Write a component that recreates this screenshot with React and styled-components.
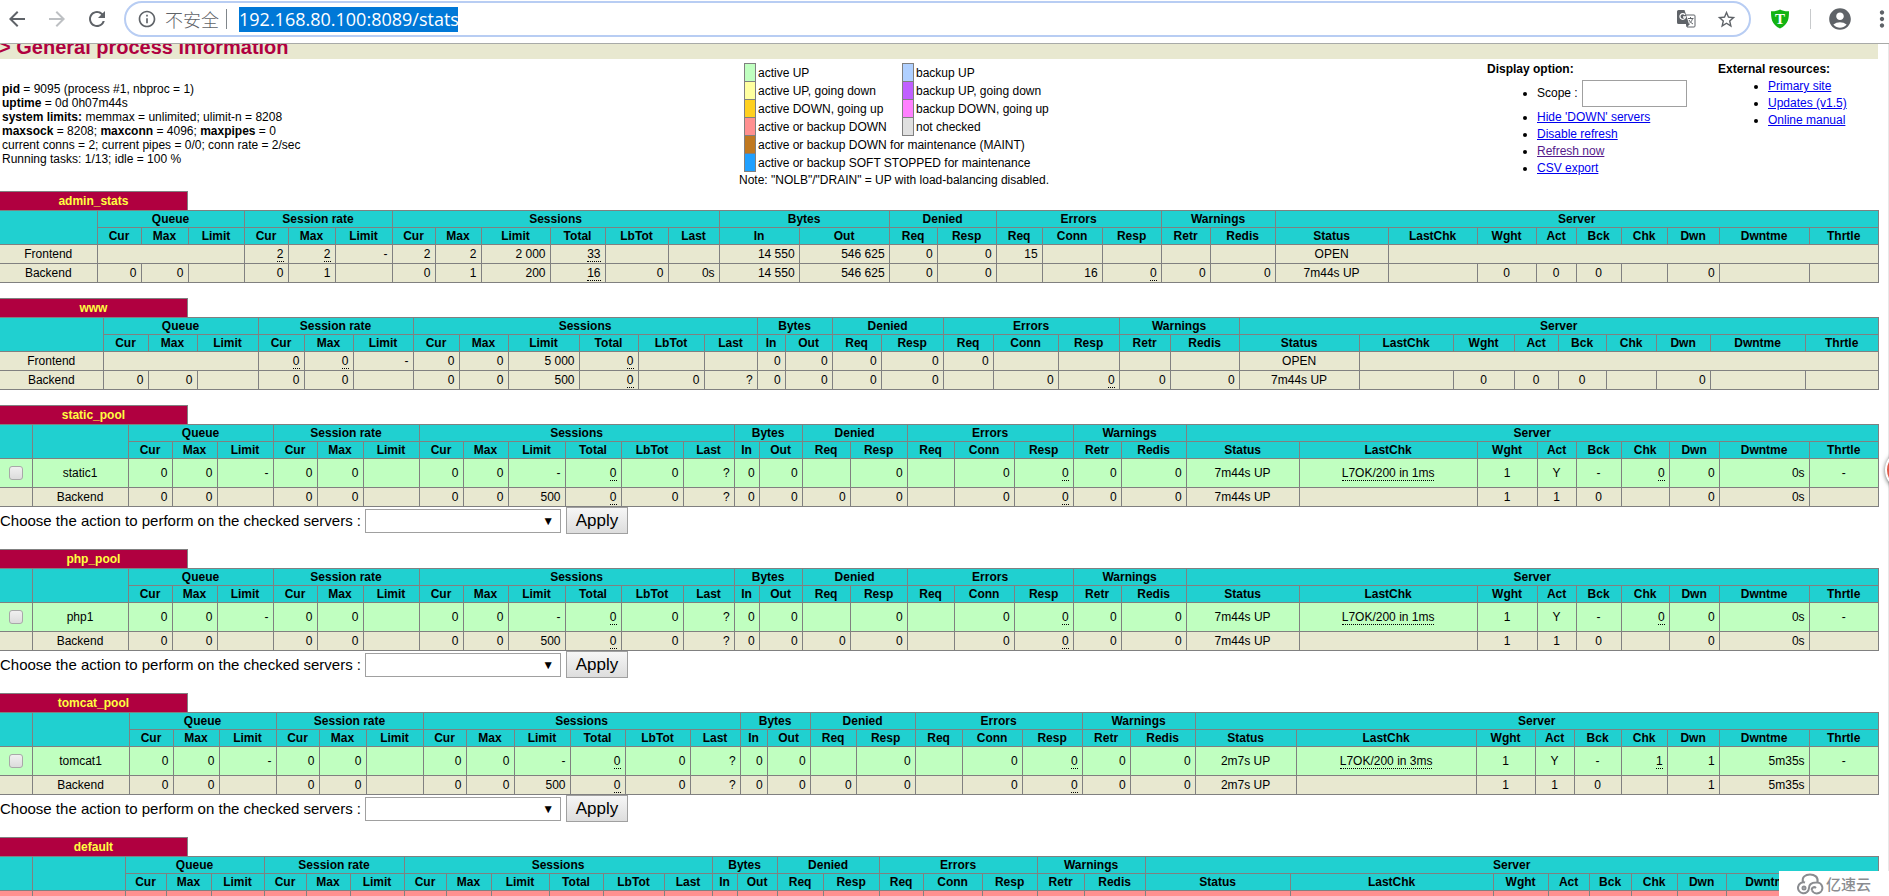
import React, { useState } from "react";
import styled, { createGlobalStyle } from "styled-components";
import {
  MdAccountCircle,
  MdArrowBack,
  MdArrowForward,
  MdInfoOutline,
  MdMoreVert,
  MdRefresh,
  MdStarBorder,
} from "react-icons/md";

const groups = [
  { title: "Queue", cols: ["Cur", "Max", "Limit"] },
  { title: "Session rate", cols: ["Cur", "Max", "Limit"] },
  { title: "Sessions", cols: ["Cur", "Max", "Limit", "Total", "LbTot", "Last"] },
  { title: "Bytes", cols: ["In", "Out"] },
  { title: "Denied", cols: ["Req", "Resp"] },
  { title: "Errors", cols: ["Req", "Conn", "Resp"] },
  { title: "Warnings", cols: ["Retr", "Redis"] },
  {
    title: "Server",
    cols: ["Status", "LastChk", "Wght", "Act", "Bck", "Chk", "Dwn", "Dwntme", "Thrtle"],
  },
];

// positions in a row (without checkbox and name) that are centered
const centered = [21, 22, 23, 24, 25, 29];

const poolWidths = [
  32, 96, 44, 45, 56, 44, 46, 56, 44, 45, 57, 56, 62, 51, 25, 43, 48, 57, 47,
  60, 59, 48, 65, 113, 178, 60, 39, 45, 48, 50, 90, 69,
];

const proxies = [
  {
    name: "admin_stats",
    widths: [
      97, 44, 47, 56, 44, 47, 57, 43, 46, 69, 55, 63, 51, 80, 90, 48, 59, 46,
      60, 59, 49, 65, 113, 89, 59, 40, 45, 46, 52, 90, 69,
    ],
    rows: [
      {
        type: "frontend",
        name: "Frontend",
        cells: ["_2", "_2", "-", "2", "2", "2 000", "_33", "", "", "14 550", "546 625", "0", "0", "15", "", "", "", "", "OPEN"],
      },
      {
        type: "backend",
        name: "Backend",
        cells: ["0", "0", "", "0", "1", "", "0", "1", "200", "_16", "0", "0s", "14 550", "546 625", "0", "0", "", "16", "_0", "0", "0", "7m44s UP", "", "0", "0", "0", "", "0", "", ""],
      },
    ],
  },
  {
    name: "www",
    widths: [
      103, 45, 49, 61, 46, 49, 60, 46, 49, 71, 59, 66, 53, 28, 47, 49, 62, 50,
      65, 61, 51, 69, 120, 94, 61, 44, 48, 50, 54, 95, 73,
    ],
    rows: [
      {
        type: "frontend",
        name: "Frontend",
        cells: ["_0", "_0", "-", "0", "0", "5 000", "_0", "", "", "0", "0", "0", "0", "0", "", "", "", "", "OPEN"],
      },
      {
        type: "backend",
        name: "Backend",
        cells: ["0", "0", "", "0", "0", "", "0", "0", "500", "_0", "0", "?", "0", "0", "0", "0", "", "0", "_0", "0", "0", "7m44s UP", "", "0", "0", "0", "", "0", "", ""],
      },
    ],
  },
  {
    name: "static_pool",
    admin: true,
    widths: poolWidths,
    rows: [
      {
        type: "up",
        name: "static1",
        cells: ["0", "0", "-", "0", "0", "", "0", "0", "-", "_0", "0", "?", "0", "0", "", "0", "", "0", "_0", "0", "0", "7m44s UP", "_L7OK/200 in 1ms", "1", "Y", "-", "_0", "0", "0s", "-"],
      },
      {
        type: "backend",
        name: "Backend",
        cells: ["0", "0", "", "0", "0", "", "0", "0", "500", "_0", "0", "?", "0", "0", "0", "0", "", "0", "_0", "0", "0", "7m44s UP", "", "1", "1", "0", "", "0", "0s", ""],
      },
    ],
  },
  {
    name: "php_pool",
    admin: true,
    widths: poolWidths,
    rows: [
      {
        type: "up",
        name: "php1",
        cells: ["0", "0", "-", "0", "0", "", "0", "0", "-", "_0", "0", "?", "0", "0", "", "0", "", "0", "_0", "0", "0", "7m44s UP", "_L7OK/200 in 1ms", "1", "Y", "-", "_0", "0", "0s", "-"],
      },
      {
        type: "backend",
        name: "Backend",
        cells: ["0", "0", "", "0", "0", "", "0", "0", "500", "_0", "0", "?", "0", "0", "0", "0", "", "0", "_0", "0", "0", "7m44s UP", "", "1", "1", "0", "", "0", "0s", ""],
      },
    ],
  },
  {
    name: "tomcat_pool",
    admin: true,
    widths: [
      32, 97, 44, 46, 57, 43, 47, 57, 43, 48, 56, 55, 65, 50, 27, 43, 46, 59,
      47, 60, 60, 48, 65, 101, 180, 59, 39, 47, 46, 52, 90, 69,
    ],
    rows: [
      {
        type: "up",
        name: "tomcat1",
        cells: ["0", "0", "-", "0", "0", "", "0", "0", "-", "_0", "0", "?", "0", "0", "", "0", "", "0", "_0", "0", "0", "2m7s UP", "_L7OK/200 in 3ms", "1", "Y", "-", "_1", "1", "5m35s", "-"],
      },
      {
        type: "backend",
        name: "Backend",
        cells: ["0", "0", "", "0", "0", "", "0", "0", "500", "_0", "0", "?", "0", "0", "0", "0", "", "0", "_0", "0", "0", "2m7s UP", "", "1", "1", "0", "", "1", "5m35s", ""],
      },
    ],
  },
  {
    name: "default",
    admin: true,
    widths: [
      32, 93, 41, 45, 53, 42, 44, 54, 42, 45, 58, 54, 61, 48, 25, 40, 46, 56,
      44, 59, 55, 47, 61, 145, 203, 55, 41, 42, 46, 49, 85, 67,
    ],
    rows: [{ type: "down", name: "", cells: Array(30).fill("") }],
  },
];

const Value = ({ text }) =>
  text.startsWith("_") ? <Tip>{text.slice(1)}</Tip> : text;

const StatsRow = ({ row, admin }) => {
  const isFrontend = row.type === "frontend";
  const isServer = row.type === "up" || row.type === "down";
  const offset = isFrontend ? 3 : 0;

  return (
    <Row $type={row.type}>
      {admin && (
        <Cell $center>
          {isServer && <Checkbox type="checkbox" aria-label={row.name || "server"} />}
        </Cell>
      )}
      <Cell $center>{row.name}</Cell>
      {isFrontend && <Cell colSpan={3} />}
      {row.cells.map((text, i) => (
        <Cell key={i} $center={centered.includes(i + offset)}>
          <Value text={text} />
        </Cell>
      ))}
      {isFrontend && <Cell colSpan={8} />}
    </Row>
  );
};

const ActionForm = ({ name }) => {
  const [action, setAction] = useState("");
  const id = `action-${name}`;

  return (
    <Form onSubmit={(e) => e.preventDefault()}>
      <label htmlFor={id}>Choose the action to perform on the checked servers :</label>
      <SelectBox>
        <select id={id} value={action} onChange={(e) => setAction(e.target.value)}>
          <option value=""></option>
          <option value="ready">Set state to READY</option>
          <option value="drain">Set state to DRAIN</option>
          <option value="maint">Set state to MAINT</option>
        </select>
      </SelectBox>
      <ApplyButton type="submit">Apply</ApplyButton>
    </Form>
  );
};

const Proxy = ({ proxy }) => (
  <ProxyStyled>
    <ProxyName>{proxy.name}</ProxyName>
    <StatsTable>
      <colgroup>
        {proxy.widths.map((width, i) => (
          <col key={i} style={{ width }} />
        ))}
      </colgroup>
      <thead>
        <tr>
          {proxy.admin && <HeadCell rowSpan={2} />}
          <HeadCell rowSpan={2} />
          {groups.map((group) => (
            <HeadCell key={group.title} colSpan={group.cols.length}>
              {group.title}
            </HeadCell>
          ))}
        </tr>
        <SubHeadRow>
          {groups.map((group) =>
            group.cols.map((col) => <HeadCell key={group.title + col}>{col}</HeadCell>)
          )}
        </SubHeadRow>
      </thead>
      <tbody>
        {proxy.rows.map((row, i) => (
          <StatsRow key={i} row={row} admin={proxy.admin} />
        ))}
      </tbody>
    </StatsTable>
    {proxy.admin && <ActionForm name={proxy.name} />}
  </ProxyStyled>
);

const TranslateIcon = () => (
  <svg width="19" height="18" viewBox="0 0 19 18">
    <path d="M8 5H17a1 1 0 0 1 1 1V16a1 1 0 0 1-1 1H10z" fill="#fff" stroke="#5f6368" />
    <path d="M1.500 0H7.500L12 14H1.500A1.500 1.500 0 0 1 0 12.500V1.500A1.500 1.500 0 0 1 1.500 0Z" fill="#5f6368" />
    <path d="M9 14h4l-3 3z" fill="#5f6368" />
    <path d="M8 4.800A2.800 2.800 0 1 0 8.500 7H6" fill="none" stroke="#fff" strokeWidth="1.300" />
    <path d="M11 8.500H16.500M13.500 7V8.500M15.500 8.500C15 11 13.500 12.500 12.500 13.200M12 10C13 12 14.500 13 16 14" fill="none" stroke="#5f6368" />
  </svg>
);

const Toolbar = () => {
  const [url, setUrl] = useState("192.168.80.100:8089/stats");

  return (
    <ToolbarStyled>
      <NavButton aria-label="Back">
        <MdArrowBack size={24} />
      </NavButton>
      <NavButton aria-label="Forward" $muted>
        <MdArrowForward size={24} />
      </NavButton>
      <NavButton aria-label="Reload">
        <MdRefresh size={26} />
      </NavButton>
      <Omnibox>
        <MdInfoOutline size={20} />
        <Insecure>不安全</Insecure>
        <Divider $dark />
        <UrlInput
          type="text"
          aria-label="Address"
          value={url}
          onChange={(e) => setUrl(e.target.value)}
        />
        <OmniboxActions>
          <TranslateIcon />
          <MdStarBorder size={21} />
        </OmniboxActions>
      </Omnibox>
      <ToolbarEnd>
        <svg width="20" height="20" viewBox="0 0 20 20">
          <path
            d="M10 0.5C7.5 2 4 2.4 1 2.2C1 9 1.4 15.5 10 19.5C18.6 15.5 19 9 19 2.2C16 2.4 12.5 2 10 0.5Z"
            fill="#12b312"
          />
          <text x="10" y="15" textAnchor="middle" fontFamily="Liberation Serif, serif" fontSize="15" fontWeight="700" fill="#fff">
            T
          </text>
        </svg>
        <Divider />
        <MdAccountCircle size={26} />
        <MdMoreVert size={26} />
      </ToolbarEnd>
    </ToolbarStyled>
  );
};

const Legend = () => (
  <div>
    <LegendTable>
      <tbody>
        <tr>
          <Swatch $color="#c0ffc0" />
          <LegendLabel $first>active UP</LegendLabel>
          <Swatch $color="#b0d0ff" />
          <LegendLabel>backup UP</LegendLabel>
        </tr>
        <tr>
          <Swatch $color="#ffffa0" />
          <LegendLabel $first>active UP, going down</LegendLabel>
          <Swatch $color="#c060ff" />
          <LegendLabel>backup UP, going down</LegendLabel>
        </tr>
        <tr>
          <Swatch $color="#ffd020" />
          <LegendLabel $first>active DOWN, going up</LegendLabel>
          <Swatch $color="#ff80ff" />
          <LegendLabel>backup DOWN, going up</LegendLabel>
        </tr>
        <tr>
          <Swatch $color="#ff9090" />
          <LegendLabel $first>active or backup DOWN</LegendLabel>
          <Swatch $color="#e0e0e0" />
          <LegendLabel>not checked</LegendLabel>
        </tr>
        <tr>
          <Swatch $color="#c07820" />
          <LegendLabel colSpan={3}>active or backup DOWN for maintenance (MAINT)</LegendLabel>
        </tr>
        <tr>
          <Swatch $color="#20a0ff" />
          <LegendLabel colSpan={3}>active or backup SOFT STOPPED for maintenance</LegendLabel>
        </tr>
      </tbody>
    </LegendTable>
    Note: "NOLB"/"DRAIN" = UP with load-balancing disabled.
  </div>
);

const App = () => {
  const [scope, setScope] = useState("");

  return (
    <AppStyled>
      <GlobalStyle />
      <Toolbar />
      <Page>
        <Heading>
          <h1>&gt; General process information</h1>
        </Heading>
        <Info>
          <Process>
            <b>pid</b> = 9095 (process #1, nbproc = 1)
            <br />
            <b>uptime</b> = 0d 0h07m44s
            <br />
            <b>system limits:</b> memmax = unlimited; ulimit-n = 8208
            <br />
            <b>maxsock</b> = 8208; <b>maxconn</b> = 4096; <b>maxpipes</b> = 0
            <br />
            current conns = 2; current pipes = 0/0; conn rate = 2/sec
            <br />
            Running tasks: 1/13; idle = 100 %
          </Process>
          <Legend />
          <Links>
            <b>Display option:</b>
            <ul>
              <li>
                <label htmlFor="scope">Scope : </label>
                <ScopeInput
                  id="scope"
                  type="text"
                  value={scope}
                  onChange={(e) => setScope(e.target.value)}
                />
              </li>
              <li><Link href="#hide">Hide 'DOWN' servers</Link></li>
              <li><Link href="#norefresh">Disable refresh</Link></li>
              <li><Link href="#stats" $visited>Refresh now</Link></li>
              <li><Link href="#csv">CSV export</Link></li>
            </ul>
          </Links>
          <Links>
            <b>External resources:</b>
            <ul>
              <li><Link href="#primary">Primary site</Link></li>
              <li><Link href="#updates">Updates (v1.5)</Link></li>
              <li><Link href="#manual">Online manual</Link></li>
            </ul>
          </Links>
        </Info>
        {proxies.map((proxy) => (
          <Proxy key={proxy.name} proxy={proxy} />
        ))}
      </Page>
      <FloatingBadge />
      <Watermark>
        <svg width="27" height="22" viewBox="0 0 27 22" fill="none" stroke="#8a8c90" strokeWidth="2">
          <path d="M6 9C4.500 4 8.500 1.500 13 1.500C17.500 1.500 21.500 4 20.500 9" />
          <path d="M8 9.500A5.500 5.500 0 1 0 12 15C12 12 13.500 9.500 19 9.500A5.500 5.500 0 1 1 15 17.500" />
          <circle cx="7" cy="15" r="1.500" />
          <path d="M15 17.500C14 15 17 13 19 15" />
        </svg>
        亿速云
      </Watermark>
    </AppStyled>
  );
};

export default App;

const GlobalStyle = createGlobalStyle`
  * {
    box-sizing: border-box;
  }
  body {
    margin: 0;
    background-color: #ffffff;
    font-family: "Liberation Sans", Arial, sans-serif;
    font-size: 12px;
    line-height: 14px;
    color: #000000;
  }
`;

const AppStyled = styled.div`
  position: relative;
  display: flex;
  flex-direction: column;
  height: 100vh;
  overflow: hidden;
`;

const ToolbarStyled = styled.header`
  display: flex;
  align-items: center;
  flex: none;
  padding: 1px 0 6px 5px;
  border-bottom: 1px solid #a8aaa8;
  color: #5f6368;
`;

const NavButton = styled.button`
  display: flex;
  align-items: center;
  justify-content: center;
  width: 24px;
  height: 24px;
  margin-right: 16px;
  padding: 0;
  border: none;
  background: none;
  color: ${({ $muted }) => ($muted ? "#bdc0c3" : "#5f6368")};
`;

const Omnibox = styled.div`
  flex: 1;
  display: flex;
  align-items: center;
  height: 36px;
  padding: 0 12px 0 11px;
  margin-left: -1px;
  border: 2px solid #b8cdf3;
  border-radius: 18px;
`;

const Insecure = styled.span`
  margin: 0 7px 0 8px;
  font-family: "Noto Sans CJK SC", sans-serif;
  font-size: 18px;
  font-weight: 300;
  line-height: 24px;
`;

const Divider = styled.span`
  width: 1px;
  height: 20px;
  background-color: ${({ $dark }) => ($dark ? "#80868b" : "#c8cacc")};
`;

const UrlInput = styled.input`
  width: 219px;
  height: 25px;
  margin-left: 12px;
  padding: 0;
  border: none;
  outline: none;
  background-color: #0078d7;
  color: #ffffff;
  font-family: "Open Sans", sans-serif;
  font-size: 18px;
`;

const OmniboxActions = styled.div`
  display: flex;
  align-items: center;
  gap: 20px;
  margin-left: auto;
`;

const ToolbarEnd = styled.div`
  display: flex;
  align-items: center;
  gap: 16px;
  margin: 0 -6px 0 19px;

  ${Divider} {
    margin-left: 4px;
  }
`;

const Page = styled.main`
  flex: 1;
  overflow: hidden;
  padding-right: 10px;
  border-right: 1px solid #e8e8e8;
`;

const Heading = styled.div`
  display: flex;
  align-items: flex-end;
  height: 15px;
  overflow: hidden;
  background-color: #e8e8d0;

  h1 {
    margin: 0 0 0 -1px;
    font-size: 20px;
    line-height: 24px;
    color: #b00040;
  }
`;

const Info = styled.section`
  display: grid;
  grid-template-columns: 739fr 748fr 231fr 160fr;
  padding: 4px 0;
`;

const Process = styled.div`
  padding: 19px 0 0 2px;
`;

const LegendTable = styled.table`
  margin: 0 0 1px 5px;
  border-collapse: collapse;
`;

const Swatch = styled.td`
  width: 11px;
  padding: 0;
  border: 1px solid gray;
  background-color: ${({ $color }) => $color};
`;

const LegendLabel = styled.td`
  width: ${({ $first }) => ($first ? "147px" : "auto")};
  height: 18px;
  padding: 0 0 0 2px;
  white-space: nowrap;
`;

const Links = styled.div`
  line-height: 17px;
  margin-top: -2px;

  ul {
    margin: 0;
    padding-left: 50px;
  }
`;

const ScopeInput = styled.input`
  width: 105px;
  height: 27px;
  margin: 2px 0 2px 1px;
  border: 1px solid #a0a0a0;
  vertical-align: middle;
`;

const Link = styled.a`
  color: ${({ $visited }) => ($visited ? "#551a8b" : "#0000ee")};
`;

const ProxyStyled = styled.section`
  margin-bottom: 15px;
`;

const ProxyName = styled.h2`
  width: 10%;
  margin: 0;
  border: 1px solid gray;
  border-width: 1px 1px 0 0;
  background-color: #b00040;
  color: #ffff40;
  font-size: 12px;
  line-height: 18px;
  text-align: center;
`;

const StatsTable = styled.table`
  width: 100%;
  table-layout: fixed;
  border-collapse: collapse;

  tr > :first-child {
    border-left: none;
  }
`;

const HeadCell = styled.th`
  padding: 0;
  border: 1px solid gray;
  background-color: #20d0d0;
  line-height: 16px;
`;

// its first cell follows the row-spanning name cell, so it keeps its left line
const SubHeadRow = styled.tr`
  && > :first-child {
    border-left: 1px solid gray;
  }
`;

const rowColors = {
  frontend: "#e8e8d0",
  backend: "#e8e8d0",
  up: "#c0ffc0",
  down: "#ff9090",
};

const Row = styled.tr`
  height: ${({ $type }) => ($type === "up" || $type === "down" ? "29px" : "19px")};
  background-color: ${({ $type }) => rowColors[$type]};
`;

const Cell = styled.td`
  padding: ${({ $center }) => ($center ? "1px 0" : "1px 4px 1px 0")};
  border: 1px solid gray;
  line-height: 16px;
  text-align: ${({ $center }) => ($center ? "center" : "right")};
  white-space: nowrap;
`;

const Tip = styled.span`
  border-bottom: 1px dotted black;
`;

const Checkbox = styled.input`
  appearance: none;
  display: block;
  width: 14px;
  height: 14px;
  margin: 0 auto;
  border: 1px solid #a8a8a8;
  border-radius: 3px;
  background: linear-gradient(#f0f0f0, #dcdcdc);
`;

const Form = styled.form`
  display: flex;
  align-items: center;
  height: 27px;
  font-size: 15px;
`;

const SelectBox = styled.div`
  position: relative;
  margin: 0 5px 0 4px;

  select {
    appearance: none;
    display: block;
    width: 196px;
    height: 24px;
    padding: 0 24px 0 4px;
    border: 1px solid #a0a0a0;
    background-color: #ffffff;
    font: inherit;
  }

  &::after {
    content: "▼";
    position: absolute;
    top: 5px;
    right: 7px;
    font-size: 12px;
    pointer-events: none;
  }
`;

const ApplyButton = styled.button`
  width: 62px;
  height: 27px;
  padding: 0;
  border: 1px solid #a0a0a0;
  background: linear-gradient(#f6f6f6, #dddddd);
  font-family: inherit;
  font-size: 17px;
`;

const FloatingBadge = styled.div`
  position: absolute;
  top: 450px;
  right: -36px;
  width: 40px;
  height: 40px;
  border: 2px solid #ffffff;
  border-radius: 50%;
  background-color: #e05a48;
  box-shadow: 0 1px 4px rgba(0, 0, 0, 0.6);
`;

const Watermark = styled.div`
  position: absolute;
  right: 0;
  bottom: 0;
  display: flex;
  align-items: center;
  gap: 2px;
  height: 25px;
  padding: 0 18px;
  background-color: #ffffff;
  color: #8a8c90;
  font-family: "Noto Sans CJK SC", sans-serif;
  font-size: 15px;
  font-weight: 500;
`;
